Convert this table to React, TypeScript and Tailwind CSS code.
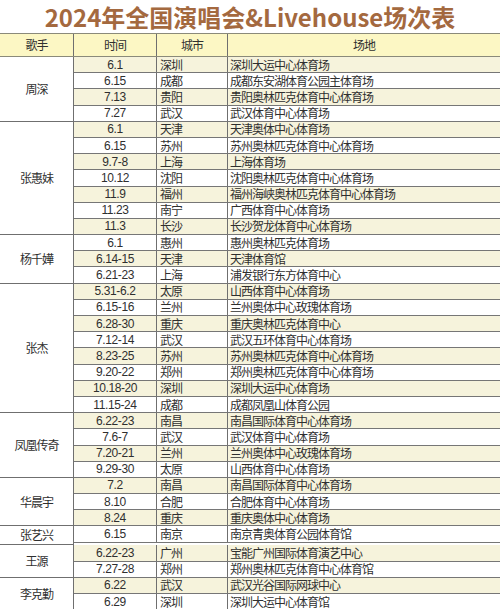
import React from "react";

type Row = [string, string, string];
type Group = { singer: string; rows: Row[] };

const groups: Group[] = [
  {
    singer: "周深",
    rows: [
      ["6.1", "深圳", "深圳大运中心体育场"],
      ["6.15", "成都", "成都东安湖体育公园主体育场"],
      ["7.13", "贵阳", "贵阳奥林匹克体育中心体育场"],
      ["7.27", "武汉", "武汉体育中心体育场"],
    ],
  },
  {
    singer: "张惠妹",
    rows: [
      ["6.1", "天津", "天津奥体中心体育场"],
      ["6.15", "苏州", "苏州奥林匹克体育中心体育场"],
      ["9.7-8", "上海", "上海体育场"],
      ["10.12", "沈阳", "沈阳奥林匹克体育中心体育场"],
      ["11.9", "福州", "福州海峡奥林匹克体育中心体育场"],
      ["11.23", "南宁", "广西体育中心体育场"],
      ["11.3", "长沙", "长沙贺龙体育中心体育场"],
    ],
  },
  {
    singer: "杨千嬅",
    rows: [
      ["6.1", "惠州", "惠州奥林匹克体育场"],
      ["6.14-15", "天津", "天津体育馆"],
      ["6.21-23", "上海", "浦发银行东方体育中心"],
    ],
  },
  {
    singer: "张杰",
    rows: [
      ["5.31-6.2", "太原", "山西体育中心体育场"],
      ["6.15-16", "兰州", "兰州奥体中心玫瑰体育场"],
      ["6.28-30", "重庆", "重庆奥林匹克体育中心"],
      ["7.12-14", "武汉", "武汉五环体育中心体育场"],
      ["8.23-25", "苏州", "苏州奥林匹克体育中心体育场"],
      ["9.20-22", "郑州", "郑州奥林匹克体育中心体育场"],
      ["10.18-20", "深圳", "深圳大运中心体育场"],
      ["11.15-24", "成都", "成都凤凰山体育公园"],
    ],
  },
  {
    singer: "凤凰传奇",
    rows: [
      ["6.22-23", "南昌", "南昌国际体育中心体育场"],
      ["7.6-7", "武汉", "武汉体育中心体育场"],
      ["7.20-21", "兰州", "兰州奥体中心玫瑰体育场"],
      ["9.29-30", "太原", "山西体育中心体育场"],
    ],
  },
  {
    singer: "华晨宇",
    rows: [
      ["7.2", "南昌", "南昌国际体育中心体育场"],
      ["8.10", "合肥", "合肥体育中心体育场"],
      ["8.24", "重庆", "重庆奥体中心体育场"],
    ],
  },
  {
    singer: "张艺兴",
    rows: [["6.15", "南京", "南京青奥体育公园体育馆"]],
  },
  {
    singer: "王源",
    rows: [
      ["6.22-23", "广州", "宝能广州国际体育演艺中心"],
      ["7.27-28", "郑州", "郑州奥林匹克体育中心体育馆"],
    ],
  },
  {
    singer: "李克勤",
    rows: [
      ["6.22", "武汉", "武汉光谷国际网球中心"],
      ["6.29", "深圳", "深圳大运中心体育馆"],
    ],
  },
];

const cjk = { fontFamily: '"Noto Sans CJK SC", "Noto Sans", sans-serif' };
const num = { fontFamily: '"Liberation Sans", "Noto Sans CJK SC", sans-serif' };

export default function App() {
  let idx = 0;
  return (
    <div className="w-[500px] h-[609px] overflow-hidden bg-white text-[#2f2f2f]">
      <div
        className="h-[33px] flex items-center justify-center text-[24px] font-bold text-[#a4693f] leading-none"
        style={cjk}
      >
        2024年全国演唱会&amp;Livehouse场次表
      </div>
      <div
        className="h-[24px] flex bg-[#fcf7c4] border-t border-b border-[#8a8a7a] text-[12px] tracking-[-1px]"
        style={cjk}
      >
        <div className="w-[74px] shrink-0 flex items-center justify-center border-r border-[#6f6f6f]">歌手</div>
        <div className="w-[83px] shrink-0 flex items-center justify-center border-r border-[#6f6f6f]">时间</div>
        <div className="w-[71px] shrink-0 flex items-center justify-center border-r border-[#6f6f6f]">城市</div>
        <div className="flex-1 flex items-center justify-center">场地</div>
      </div>
      {groups.map((g) => (
        <div key={g.singer} className="flex">
          <div
            className="w-[74px] shrink-0 flex items-center justify-center border-r border-b border-[#6f6f6f] text-[12px] tracking-[-1px] bg-white"
            style={cjk}
          >
            {g.singer}
          </div>
          <div className="flex-1 flex flex-col">
            {g.rows.map((r) => {
              const cream = idx % 2 === 0;
              idx++;
              return (
                <div
                  key={r[0] + r[1]}
                  className={
                    "h-[16.2px] flex border-b border-[#767676] leading-none " +
                    (cream ? "bg-[#f6f3dc]" : "bg-white")
                  }
                >
                  <div
                    className="w-[83px] shrink-0 flex items-center justify-center border-r border-[#6f6f6f] text-[12px] tracking-[-0.4px]"
                    style={num}
                  >
                    {r[0]}
                  </div>
                  <div
                    className="w-[71px] shrink-0 flex items-center pl-[3px] border-r border-[#6f6f6f] text-[12px] tracking-[-1px]"
                    style={cjk}
                  >
                    {r[1]}
                  </div>
                  <div
                    className="flex-1 flex items-center pl-[2px] text-[12px] tracking-[-1px] whitespace-nowrap"
                    style={cjk}
                  >
                    {r[2]}
                  </div>
                </div>
              );
            })}
          </div>
        </div>
      ))}
    </div>
  );
}
